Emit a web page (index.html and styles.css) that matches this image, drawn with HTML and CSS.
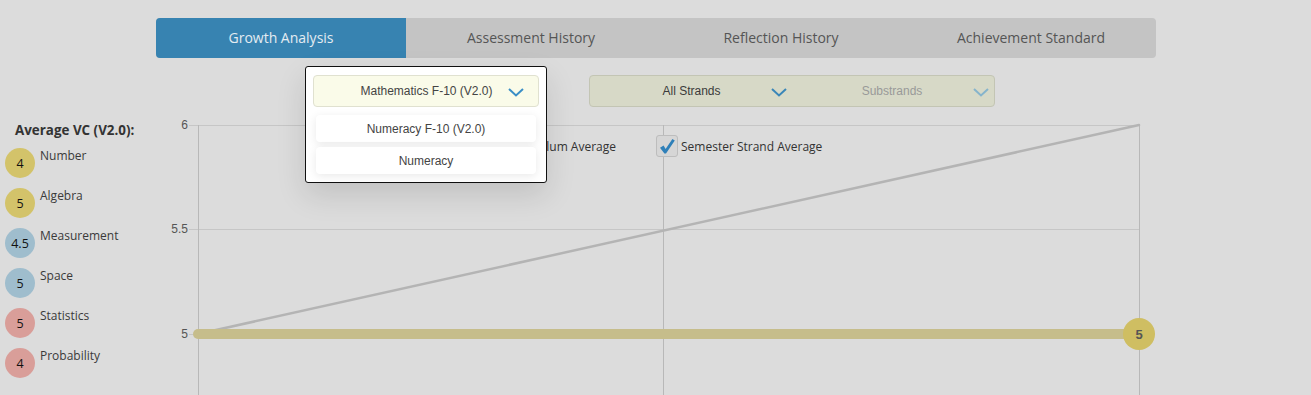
FILE: index.html
```html
<!DOCTYPE html>
<html lang="en">
<head>
    <meta charset="UTF-8">
    <title>Growth Analysis</title>
    <link rel="stylesheet" href="styles.css">
</head>
<body>
    <div class="tabs">
        <div class="tab active">Growth Analysis</div>
        <div class="tab">Assessment History</div>
        <div class="tab">Reflection History</div>
        <div class="tab">Achievement Standard</div>
    </div>

    <div class="filters">
        <div class="strands">
            <div class="strand">
                <span class="strand-label">All Strands</span>
                <svg class="chevron" width="16" height="9" viewBox="0 0 16 9"><polyline points="1,1 8,7.5 15,1" fill="none" stroke="#3a86b8" stroke-width="2"/></svg>
            </div>
            <div class="strand disabled">
                <span class="strand-label">Substrands</span>
                <svg class="chevron" width="16" height="9" viewBox="0 0 16 9"><polyline points="1,1 8,7.5 15,1" fill="none" stroke="#86b4cc" stroke-width="2"/></svg>
            </div>
        </div>

        <!-- curriculum picker, open -->
        <div class="popover">
            <div class="curriculum-select">
                <span class="select-label">Mathematics F-10 (V2.0)</span>
                <svg class="chevron" width="16" height="9" viewBox="0 0 16 9"><polyline points="1,1 8,7.5 15,1" fill="none" stroke="#3a8ec6" stroke-width="2"/></svg>
            </div>
            <div class="option">Numeracy F-10 (V2.0)</div>
            <div class="option">Numeracy</div>
        </div>
    </div>

    <div class="content">
        <div class="sidebar">
            <div class="sidebar-title">Average VC (V2.0):</div>
            <div class="strand-row"><span class="dot gold">4</span><span class="strand-name">Number</span></div>
            <div class="strand-row"><span class="dot gold">5</span><span class="strand-name">Algebra</span></div>
            <div class="strand-row"><span class="dot blue">4.5</span><span class="strand-name">Measurement</span></div>
            <div class="strand-row"><span class="dot blue">5</span><span class="strand-name">Space</span></div>
            <div class="strand-row"><span class="dot pink">5</span><span class="strand-name">Statistics</span></div>
            <div class="strand-row"><span class="dot pink">4</span><span class="strand-name">Probability</span></div>
        </div>

        <div class="chart">
            <svg width="1151" height="280" viewBox="0 0 1151 280">
                <g stroke="#c6c6c6" stroke-width="1">
                    <line x1="29" y1="10.5" x2="979" y2="10.5"/>
                    <line x1="29" y1="114.5" x2="979" y2="114.5"/>
                    <line x1="29" y1="219.5" x2="979" y2="219.5"/>
                </g>
                <g stroke="#b8b8b8" stroke-width="1">
                    <line x1="38.5" y1="10" x2="38.5" y2="280"/>
                    <line x1="503.5" y1="10" x2="503.5" y2="280"/>
                    <line x1="979.5" y1="10" x2="979.5" y2="280"/>
                </g>
                <g class="axis-label" text-anchor="end">
                    <text x="28" y="14">6</text>
                    <text x="28" y="118">5.5</text>
                    <text x="28" y="223">5</text>
                </g>
                <line x1="38" y1="219" x2="979" y2="10" stroke="#b4b4b4" stroke-width="2.5" stroke-linecap="round"/>
                <line x1="38" y1="219" x2="979" y2="219" stroke="#c6bd8b" stroke-width="10" stroke-linecap="round"/>
                <circle cx="979" cy="219" r="16" fill="#cfbe62"/>
                <text class="point-label" x="979" y="223.5" text-anchor="middle">5</text>
            </svg>

            <div class="legend">
                <div class="legend-item first">
                    <span class="checkbox"></span>
                    <span>Curriculum Average</span>
                </div>
                <div class="legend-item">
                    <span class="checkbox">
                        <svg width="18" height="18" viewBox="0 0 18 18"><path d="M2 10.8 L5.6 8.4 L7.6 12 L14.4 2 L16.8 3.4 L8 16.4 L6.4 16.4 Z" fill="#2f80b9"/></svg>
                    </span>
                    <span>Semester Strand Average</span>
                </div>
            </div>
        </div>
    </div>
</body>
</html>
```

FILE: styles.css
```css
body {
    margin: 0;
    background-color: #dcdcdc;
    font-family: "Open Sans", sans-serif;
    color: #333;
    width: 1311px;
    height: 395px;
    overflow: hidden;
}
.tabs {
    display: flex;
    width: 1000px;
    height: 40px;
    margin: 18px 0 0 156px;
    background-color: #c4c4c4;
    border-radius: 4px;
    overflow: hidden;
}
.tab {
    flex: 1;
    display: flex;
    align-items: center;
    justify-content: center;
    padding-bottom: 2px;
    font-size: 14px;
    color: #555;
}
.tab.active {
    background-color: #3783b1;
    color: #e4ecf1;
}
.filters {
    position: relative;
    height: 32px;
    padding-top: 17px;
}
.strands {
    display: flex;
    width: 404px;
    height: 30px;
    margin-left: 589px;
    background-color: #d7d9c7;
    border: 1px solid #c3c5b4;
    border-radius: 4px;
    font-family: "Liberation Sans", Arial, sans-serif;
    font-size: 12px;
}
.strand {
    flex: 1;
    display: flex;
    align-items: center;
    padding-right: 5px;
    color: #3b3b3b;
}
.strand-label {
    flex: 1;
    text-align: center;
    padding-left: 22px;
}
.strand.disabled {
    color: #999;
}
.strand.disabled .strand-label {
    padding-left: 19px;
}
.chevron {
    display: block;
    margin-top: 2px;
}
.popover {
    position: absolute;
    left: 305px;
    top: 8px;
    width: 226px;
    padding: 8px 7px 8px;
    background-color: #fff;
    border: 1px solid #111;
    border-radius: 3px;
    box-shadow: 0 12px 30px rgba(0, 0, 0, 0.12);
    font-family: "Liberation Sans", Arial, sans-serif;
    font-size: 12px;
    color: #444;
    z-index: 2;
}
.curriculum-select {
    display: flex;
    align-items: center;
    height: 30px;
    padding-right: 14px;
    background-color: #fafbe9;
    border: 1px solid #e0e1d0;
    border-radius: 4px;
}
.select-label {
    flex: 1;
    text-align: center;
    padding-left: 31px;
}
.option {
    height: 27px;
    margin: 0 3px;
    display: flex;
    align-items: center;
    justify-content: center;
    background-color: #fff;
    border-radius: 4px;
    box-shadow: 0 2px 10px rgba(0, 0, 0, 0.09);
}
.curriculum-select + .option {
    margin-top: 8px;
}
.option + .option {
    margin-top: 5px;
}
.content {
    display: flex;
    margin-top: 8px;
}
.sidebar {
    width: 155px;
    padding-left: 5px;
}
.sidebar-title {
    font-size: 13.4px;
    font-weight: bold;
    line-height: 18px;
    margin: 6px 0 9px 10px;
    color: #333;
}
.strand-row {
    display: flex;
    align-items: flex-start;
    gap: 5px;
    height: 40px;
}
.dot {
    width: 30px;
    height: 30px;
    border-radius: 50%;
    display: flex;
    align-items: center;
    justify-content: center;
    font-size: 12.5px;
    color: #111;
}
.dot.gold {
    background-color: #d3c36a;
}
.dot.blue {
    background-color: #9fbdcd;
}
.dot.pink {
    background-color: #d99e99;
}
.strand-name {
    font-size: 12px;
    line-height: 18px;
    color: #3a3a3a;
    margin-top: -1px;
}
.chart {
    position: relative;
    width: 1151px;
    height: 280px;
}
.chart svg {
    display: block;
}
.axis-label text {
    font-family: "Liberation Sans", Arial, sans-serif;
    font-size: 12px;
    fill: #555;
}
.point-label {
    font-family: "Liberation Sans", Arial, sans-serif;
    font-size: 13px;
    font-weight: bold;
    fill: #555;
}
.legend {
    position: absolute;
    left: 0;
    top: 20px;
    display: grid;
    grid-template-columns: 456px auto;
    column-gap: 40px;
    font-size: 12px;
    color: #333;
}
.legend-item {
    display: flex;
    align-items: center;
    gap: 3px;
    height: 22px;
}
.legend-item.first {
    justify-content: flex-end;
}
.checkbox {
    width: 20px;
    height: 20px;
    border: 1px solid #bdbdbd;
    border-radius: 3px;
    background-color: #d6d6d6;
    display: flex;
    align-items: center;
    justify-content: center;
}
```
